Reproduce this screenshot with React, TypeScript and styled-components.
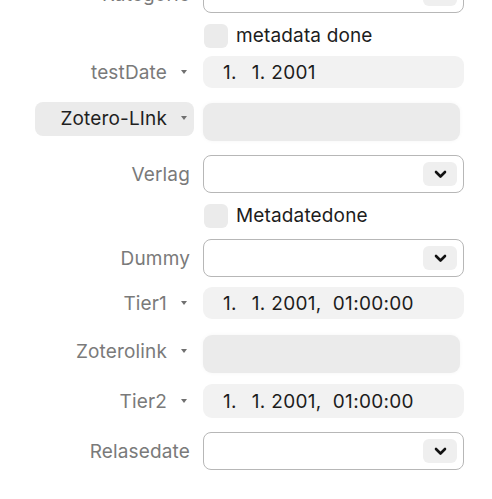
import React from "react";
import styled, { createGlobalStyle } from "styled-components";

const Global = createGlobalStyle`
  html, body { margin: 0; padding: 0; background: #ffffff; }
  body { font-family: Inter, "Noto Sans", "Liberation Sans", sans-serif; overflow: hidden; }
`;

const Form = styled.div`
  display: flex;
  flex-direction: column;
  margin-top: -25px;
`;

const Row = styled.div<{ $mt: number; $align?: string }>`
  display: grid;
  grid-template-columns: 194px 261px;
  column-gap: 9px;
  align-items: ${(p) => p.$align ?? "center"};
  margin-top: ${(p) => p.$mt}px;
`;

const Label = styled.div<{ $active?: boolean; $tall?: boolean }>`
  justify-self: end;
  display: flex;
  align-items: center;
  justify-content: flex-end;
  gap: 14px;
  height: ${(p) => (p.$tall ? "34px" : "auto")};
  box-sizing: border-box;
  padding: ${(p) => (p.$active ? "0 7px 0 22px" : "2px 4px 0 0")};
  min-width: ${(p) => (p.$active ? "159px" : "0")};
  border-radius: 8px;
  background: ${(p) => (p.$active ? "#ebebeb" : "transparent")};
  color: ${(p) => (p.$active ? "#1f1f1f" : "#7a7a7a")};
  font-size: 19px;
  line-height: 24px;
  letter-spacing: 0.15px;
  white-space: nowrap;
`;

const CaretLabel = styled(Label)`
  padding-right: 7px;
`;

const Caret = styled.span`
  width: 0;
  height: 0;
  border-left: 3.5px solid transparent;
  border-right: 3.5px solid transparent;
  border-top: 4.5px solid #707070;
  margin-top: -3px;
`;

const Select = styled.div`
  height: 38px;
  box-sizing: border-box;
  border: 1.5px solid #b7b7b7;
  border-radius: 8px;
  background: #fff;
  display: flex;
  align-items: center;
  justify-content: flex-end;
  padding-right: 6px;
`;

const ChevronButton = styled.div`
  width: 34px;
  height: 24px;
  border-radius: 6px;
  background: #efefef;
  display: flex;
  align-items: center;
  justify-content: center;
`;

const DateField = styled.div<{ $h: number }>`
  height: ${(p) => p.$h}px;
  border-radius: 9px;
  background: #f2f2f2;
  display: flex;
  align-items: center;
  padding-left: 20px;
  font-size: 19px;
  color: #1d1d1d;
  white-space: pre;
  letter-spacing: 0.3px;
`;

const TextField = styled.div`
  width: 257px;
  height: 38px;
  margin-top: 1px;
  border-radius: 9px;
  background: #ebebeb;
  box-shadow: 0 0 4px rgba(0, 0, 0, 0.04);
`;

const CheckRow = styled.label`
  grid-column: 2;
  display: flex;
  align-items: center;
  gap: 8px;
  font-size: 19px;
  line-height: 24px;
  letter-spacing: 0.15px;
  color: #1d1d1d;
`;

const Box = styled.span`
  width: 24px;
  height: 24px;
  border-radius: 6px;
  background: #ebebeb;
  margin-left: 1px;
`;

const Chevron = () => (
  <svg width="13" height="9" viewBox="0 0 13 9">
    <path d="M2 2 L6.5 6.5 L11 2" fill="none" stroke="#111" strokeWidth="2.6" strokeLinecap="round" strokeLinejoin="round" />
  </svg>
);

const SelectRow = ({ label, mt }: { label: string; mt: number }) => (
  <Row $mt={mt}>
    <Label>{label}</Label>
    <Select>
      <ChevronButton>
        <Chevron />
      </ChevronButton>
    </Select>
  </Row>
);

const DateRow = ({ label, value, mt, h }: { label: string; value: string; mt: number; h: number }) => (
  <Row $mt={mt}>
    <CaretLabel>
      {label}
      <Caret />
    </CaretLabel>
    <DateField $h={h}>{value}</DateField>
  </Row>
);

const LinkRow = ({ label, mt, active }: { label: string; mt: number; active?: boolean }) => (
  <Row $mt={mt} $align="start">
    <CaretLabel $active={active} $tall>
      {label}
      <Caret />
    </CaretLabel>
    <TextField />
  </Row>
);

const CheckboxRow = ({ label, mt }: { label: string; mt: number }) => (
  <Row $mt={mt}>
    <CheckRow>
      <Box />
      {label}
    </CheckRow>
  </Row>
);

const DATE = "1.\u2009  1. 2001";
const DATETIME = "1.\u2009  1. 2001,  01:00:00";

export default function App() {
  return (
    <>
      <Global />
      <Form>
        <SelectRow label="Kategorie" mt={0} />
        <CheckboxRow label="metadata done" mt={11} />
        <DateRow label="testDate" value={DATE} mt={8} h={32} />
        <LinkRow label="Zotero-LInk" mt={14} active />
        <SelectRow label="Verlag" mt={14} />
        <CheckboxRow label="Metadatedone" mt={11} />
        <SelectRow label="Dummy" mt={11} />
        <DateRow label="Tier1" value={DATETIME} mt={10} h={32} />
        <LinkRow label="Zoterolink" mt={15} />
        <DateRow label="Tier2" value={DATETIME} mt={11} h={34} />
        <SelectRow label="Relasedate" mt={14} />
      </Form>
    </>
  );
}
